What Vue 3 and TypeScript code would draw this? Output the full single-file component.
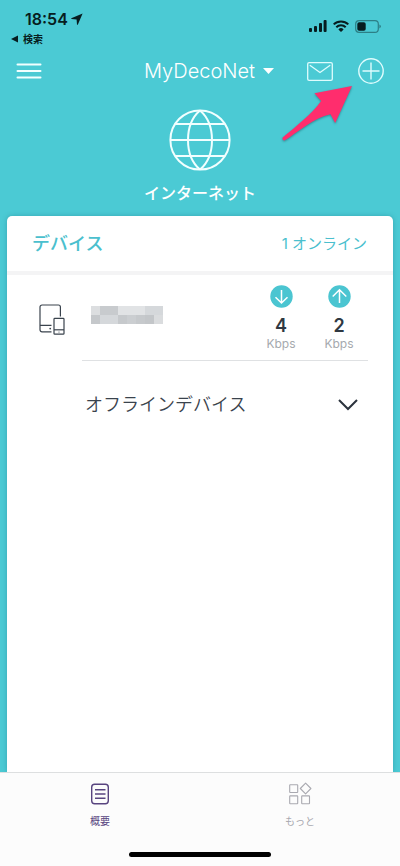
<script setup lang="ts">
import { ref } from 'vue'

interface Device {
  id: number
  down: number
  up: number
}

const devices = ref<Device[]>([{ id: 1, down: 4, up: 2 }])
const network = ref('MyDecoNet')
const activeTab = ref<'overview' | 'more'>('overview')
const offlineOpen = ref(false)

// Shades of the mosaic that hides the device name, row by row
const mosaic: string[] = [
  '#dcdee0', '#c8cbce', '#c8cbce', '#e1e3e5', '#e1e3e5', '#e1e3e5', '#d5d8db', '#d5d8db',
  '#c5c8cb', '#d5d8db', '#d5d8db', '#c6c9cc', '#cbced1', '#c6c9cc', '#c3c6c9', '#dadcde',
]
</script>

<template>
  <div class="screen">
    <div class="status">
      <div class="status-left">
        <div class="clock">
          <span>18:54</span>
          <svg width="12" height="12" viewBox="0 0 12 12"><path d="M11.6.4.3 5.2q-.4.6.3.8l5 .4.4 5q.3.7.8.3z" fill="#071d20" /></svg>
        </div>
        <a href="#" class="back">
          <svg width="7" height="8" viewBox="0 0 7 8"><path d="M7 .5v7L0 4z" fill="#071d20" /></svg>
          <span>検索</span>
        </a>
      </div>
      <div class="status-right">
        <svg width="18" height="12" viewBox="0 0 18 12" fill="#071d20">
          <rect x="0" y="8" width="3" height="4" rx="1" />
          <rect x="5" y="6" width="3" height="6" rx="1" />
          <rect x="10" y="3" width="3" height="9" rx="1" />
          <rect x="14.6" y="0" width="3" height="12" rx="1" />
        </svg>
        <svg width="16" height="12" viewBox="0 0 16 12" fill="none" stroke="#071d20" stroke-width="2">
          <path d="M.7 4.4a10.4 10.4 0 0 1 14.6 0M3.3 7.2a6.7 6.7 0 0 1 9.4 0" />
          <path d="M8 12 5.4 9.4a3.7 3.7 0 0 1 5.2 0z" fill="#071d20" stroke="none" />
        </svg>
        <svg width="26" height="13" viewBox="0 0 26 13">
          <rect x=".7" y=".7" width="22.6" height="11.6" rx="3.4" fill="none" stroke="#2c7f86" stroke-width="1.2" />
          <rect x="2.3" y="2.3" width="8.4" height="8.4" rx="1.8" fill="#071d20" />
          <path d="M24.4 4.6q1.5.6 1.5 1.9t-1.5 1.9z" fill="#2c7f86" />
        </svg>
      </div>
    </div>

    <header class="nav">
      <button class="icon-button" type="button" aria-label="メニュー">
        <svg width="26" height="16" viewBox="0 0 26 16" stroke="#f1ffff" stroke-width="2" stroke-linecap="round"><path d="M1.5 1.5h23M1.5 8h23M1.5 14.5h23" /></svg>
      </button>
      <button class="network" type="button">
        <span>{{ network }}</span>
        <svg width="11" height="6" viewBox="0 0 11 6"><path d="M0 0h11L5.5 6z" fill="#fff" /></svg>
      </button>
      <div class="actions">
        <button class="icon-button" type="button" aria-label="メッセージ">
          <svg width="26" height="19" viewBox="0 0 26 19" fill="none" stroke="#dffcfd" stroke-width="1.3" stroke-linejoin="round" stroke-linecap="round"><rect x=".7" y=".7" width="24.6" height="17.6" rx="1.4" /><path d="m3.2 3.5 9.8 7 9.8-7" /></svg>
        </button>
        <button class="icon-button" type="button" aria-label="追加">
          <svg width="26" height="26" viewBox="0 0 26 26" fill="none" stroke="#dffcfd" stroke-width="1.4"><circle cx="13" cy="13" r="12.2" /><path d="M13 4.5v17M4.5 13h17" /></svg>
        </button>
      </div>
    </header>

    <section class="internet">
      <svg width="62" height="62" viewBox="0 0 62 62" fill="none" stroke="#f1ffff" stroke-width="2">
        <circle cx="31" cy="31" r="29.6" />
        <path d="M31 1.4C15 15 15 47 31 60.6M31 1.4C47 15 47 47 31 60.6M1.4 31h59.2M6.2 15h49.6M6.2 47h49.6" />
      </svg>
      <span>インターネット</span>
    </section>

    <main class="card">
      <div class="card-head">
        <h1>デバイス</h1>
        <span class="online">{{ devices.length }} オンライン</span>
      </div>

      <div v-for="device in devices" :key="device.id" class="device">
        <svg class="device-icon" width="26" height="32" viewBox="0 0 26 32" fill="none" stroke="#3a434d" stroke-width="1.2">
          <path d="M12.5 27.8H3a2 2 0 0 1-2-2V3a2 2 0 0 1 2-2h16.4a2 2 0 0 1 2 2v9.5M1 21.3h11.5" />
          <rect x="15" y="14.4" width="10" height="15.8" rx=".8" />
          <path d="M15 25.8h10" />
          <circle cx="11.2" cy="24.6" r=".9" fill="#3a434d" stroke="none" />
          <circle cx="20" cy="28" r=".6" fill="#3a434d" stroke="none" />
        </svg>
        <div class="device-body">
          <div class="mosaic"><i v-for="(shade, i) in mosaic" :key="i" :style="{ background: shade }"></i></div>
          <div class="rates">
            <div class="rate">
              <svg width="23" height="23" viewBox="0 0 23 23"><circle cx="11.5" cy="11.5" r="11.2" fill="#4bc5d1" /><path d="M11.5 5v12.8M5.5 12.2l6 5.8 6-5.8" fill="none" stroke="#fff" stroke-width="1.5" /></svg>
              <strong>{{ device.down }}</strong>
              <span>Kbps</span>
            </div>
            <div class="rate">
              <svg width="23" height="23" viewBox="0 0 23 23"><circle cx="11.5" cy="11.5" r="11.2" fill="#4bc5d1" /><path d="M11.5 18V5.2M4.7 11.5l6.8-6.7 6.8 6.7" fill="none" stroke="#fff" stroke-width="1.5" /></svg>
              <strong>{{ device.up }}</strong>
              <span>Kbps</span>
            </div>
          </div>
        </div>
      </div>

      <button class="offline" type="button" :aria-expanded="offlineOpen" @click="offlineOpen = !offlineOpen">
        <span>オフラインデバイス</span>
        <svg width="20" height="12" viewBox="0 0 20 12" fill="none" stroke="#2b333d" stroke-width="2"><path d="m1 1 9 9 9-9" /></svg>
      </button>
    </main>

    <nav class="tabs">
      <div class="tab-row">
        <button type="button" class="tab" :class="{ active: activeTab === 'overview' }" @click="activeTab = 'overview'">
          <svg width="24" height="24" viewBox="0 0 24 24" fill="none" stroke="currentColor" stroke-width="1.4"><rect x="3.7" y="2.2" width="16.6" height="19.6" rx="3" /><path d="M7 7.7h10.5M7 12h10.5M7 16.3h10.5" /></svg>
          <span>概要</span>
        </button>
        <button type="button" class="tab" :class="{ active: activeTab === 'more' }" @click="activeTab = 'more'">
          <svg width="24" height="24" viewBox="0 0 24 24" fill="none" stroke="currentColor" stroke-width="1.1"><rect x="1.7" y="2.7" width="8" height="7.8" rx=".5" /><rect x="1.7" y="13.9" width="8" height="7.8" rx=".5" /><rect x="13.7" y="13.9" width="7.8" height="7.8" rx=".5" /><path d="m17.6 1.2 5.3 5.3-5.3 5.3-5.3-5.3z" stroke-linejoin="round" /></svg>
          <span>もっと</span>
        </button>
      </div>
      <div class="home-bar"></div>
    </nav>

    <svg class="pointer" width="76" height="62" viewBox="0 0 76 62">
      <path d="M72 4 34.5 11.3 41.2 19C31 33 15 45 2.7 55.6q-1 2.5 1.8 3C18 50 34 35.5 50.5 32.2L55.2 41z" fill="#ff2d6d" />
    </svg>
  </div>
</template>

<style>
body {
  margin: 0;
  background: #4bcad4;
}
</style>

<style scoped>
.screen {
  position: relative;
  display: flex;
  flex-direction: column;
  min-height: 100vh;
  background: #4bcad4;
  color: #3a434d;
  font-family: Inter, "Noto Sans CJK JP", sans-serif;
}
button {
  padding: 0;
  border: 0;
  background: none;
  color: inherit;
  font: inherit;
  cursor: pointer;
}
a {
  color: inherit;
  text-decoration: none;
}
svg {
  display: block;
  flex: none;
}
.status {
  display: flex;
  justify-content: space-between;
  padding: 9px 19px 0 11px;
  color: #071d20;
}
.clock {
  display: flex;
  align-items: center;
  gap: 3px;
  padding-left: 14px;
  font-size: 16px;
  font-weight: 600;
  line-height: 20px;
}
.back {
  display: flex;
  align-items: center;
  gap: 5px;
  font-size: 10px;
  font-weight: 600;
  line-height: 20px;
}
.status-right {
  display: flex;
  align-items: center;
  gap: 6px;
  height: 34px;
}
.nav {
  display: grid;
  grid-template-columns: 1fr auto 1fr;
  align-items: center;
  height: 44px;
  padding: 0 16px;
}
.network {
  display: flex;
  align-items: center;
  gap: 8px;
  padding-left: 18px;
  color: #fff;
  font-size: 20px;
  font-weight: 300;
  line-height: 28px;
}
.actions {
  display: flex;
  align-items: center;
  justify-content: flex-end;
  gap: 25px;
}
.internet {
  display: flex;
  flex-direction: column;
  align-items: center;
  gap: 10px;
  padding: 16px 0 11px;
  color: #fff;
  font-size: 16px;
  font-weight: 500;
  line-height: 24px;
}
.card {
  flex: 1;
  margin: 0 7px;
  border-radius: 5px 5px 0 0;
  background: #fff;
  box-shadow: 0 0 5px rgba(20, 100, 115, 0.35);
}
.card-head {
  display: flex;
  align-items: center;
  justify-content: space-between;
  height: 55px;
  padding: 0 26px 0 25px;
  border-bottom: 4px solid #f4f4f5;
  color: #4bbfce;
}
.card-head h1 {
  margin: 0;
  font-size: 18px;
  font-weight: 500;
  line-height: 24px;
}
.online {
  font-size: 15px;
  font-weight: 400;
  line-height: 24px;
}
.device {
  display: flex;
  padding: 0 25px 0 32px;
}
.device-icon {
  margin: 29px 17px 0 0;
}
.device-body {
  display: flex;
  flex: 1;
  justify-content: space-between;
  height: 85px;
  border-bottom: 1px solid #dfe1e3;
}
.mosaic {
  display: grid;
  grid-template-columns: repeat(8, 9px);
  grid-auto-rows: 9px;
  align-self: flex-start;
  margin: 31px 0 0 9px;
}
.rates {
  display: flex;
  gap: 18px;
  padding: 10px 9px 0 0;
}
.rate {
  display: flex;
  flex-direction: column;
  align-items: center;
  width: 40px;
}
.rate strong {
  padding-top: 7px;
  color: #2f3842;
  font-size: 18px;
  font-weight: 600;
  line-height: 22px;
}
.rate span {
  color: #a5a9ae;
  font-size: 12px;
  font-weight: 400;
  line-height: 14px;
}
.offline {
  display: flex;
  align-items: center;
  justify-content: space-between;
  width: 100%;
  height: 88px;
  padding: 0 35px 0 78px;
  font-size: 18px;
  font-weight: 350;
  line-height: 24px;
}
.tabs {
  position: relative;
  border-top: 1px solid #dddfe0;
  background: #fcfcfc;
}
.tab-row {
  display: grid;
  grid-template-columns: 1fr 1fr;
  height: 79px;
}
.tab {
  display: flex;
  flex-direction: column;
  align-items: center;
  gap: 7px;
  padding-top: 9px;
  color: #a9a9b0;
  font-size: 10px;
  line-height: 16px;
}
.tab.active {
  color: #58447f;
}
.home-bar {
  width: 142px;
  height: 5px;
  margin: 0 auto 9px;
  border-radius: 3px;
  background: #000;
}
.pointer {
  position: absolute;
  top: 82px;
  right: 44px;
  filter: drop-shadow(0 1px 1px rgba(20, 70, 80, 0.5));
  pointer-events: none;
}
</style>
